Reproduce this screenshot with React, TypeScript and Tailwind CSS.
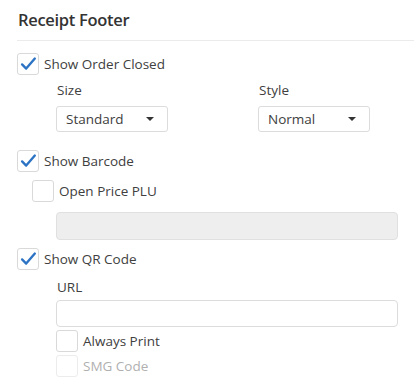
import React from "react";

function Check({ checked, faded }: { checked?: boolean; faded?: boolean }) {
  return (
    <span
      className={[
        "flex size-[22px] shrink-0 items-center justify-center rounded-[3px] border bg-white",
        faded ? "border-[#ececec]" : "border-[#d9d9d9]",
      ].join(" ")}
    >
      {checked ? (
        <svg width="22" height="22" viewBox="0 0 22 22" fill="none">
          <path
            d="M4.5 11.5 L9 16 L18.5 5"
            stroke="#2d73c4"
            strokeWidth="2.6"
            strokeLinecap="round"
            strokeLinejoin="round"
          />
        </svg>
      ) : null}
    </span>
  );
}

function CheckRow({
  label,
  checked,
  faded,
  className = "",
}: {
  label: string;
  checked?: boolean;
  faded?: boolean;
  className?: string;
}) {
  return (
    <label className={`flex h-[22px] items-center gap-[5px] ${className}`}>
      <Check checked={checked} faded={faded} />
      <span className={faded ? "text-[#b0b0b0]" : "text-[#404040]"}>{label}</span>
    </label>
  );
}

function Select({ value }: { value: string }) {
  return (
    <div className="flex h-[26px] w-[112px] items-center justify-between rounded-[3px] border border-[#dcdcdc] bg-white pl-[9px] pr-[13px] text-[#404040]">
      <span>{value}</span>
      <svg width="8" height="4" viewBox="0 0 8 4">
        <path d="M0 0 H8 L4 4 Z" fill="#333" />
      </svg>
    </div>
  );
}

export default function App() {
  return (
    <div
      className="min-h-[390px] w-[414px] bg-white pl-[17px] text-[13.5px] leading-[20px] text-[#404040]"
      style={{ fontFamily: '"Open Sans", "Noto Sans", sans-serif' }}
    >
      <div className="border-b border-[#ebebeb] pt-[8px] pb-[9px] pl-[1px]">
        <h2 className="text-[16.5px] leading-[23px] font-semibold tracking-[-0.3px] text-[#333]">
          Receipt Footer
        </h2>
      </div>

      <CheckRow className="mt-[12px]" label="Show Order Closed" checked />

      <div className="mt-[5px] grid grid-cols-[202px_1fr] pl-[39px]">
        <div>
          <div className="pl-[1px]">Size</div>
          <div className="mt-[6px]">
            <Select value="Standard" />
          </div>
        </div>
        <div>
          <div className="pl-[1px]">Style</div>
          <div className="mt-[6px]">
            <Select value="Normal" />
          </div>
        </div>
      </div>

      <CheckRow className="mt-[18px]" label="Show Barcode" checked />
      <CheckRow className="mt-[8px] ml-[15px]" label="Open Price PLU" />

      <div className="mt-[10px] ml-[39px] mr-[16px] h-[28px] rounded-[4px] border border-[#e0e0e0] bg-[#eeeeee]" />

      <CheckRow className="mt-[8px]" label="Show QR Code" checked />

      <div className="ml-[39px]">
        <div className="mt-[7px] pl-[1px]">URL</div>
        <div className="mt-[3px] mr-[16px] h-[27px] rounded-[4px] border border-[#dcdcdc] bg-white" />
        <CheckRow className="mt-[3px]" label="Always Print" />
        <CheckRow className="mt-[3px]" label="SMG Code" faded />
      </div>
    </div>
  );
}
